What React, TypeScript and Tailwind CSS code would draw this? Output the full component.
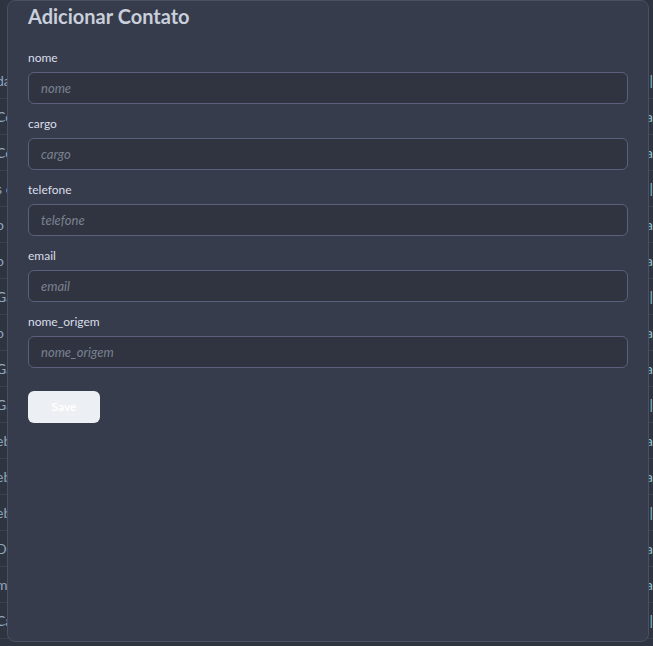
import { useState } from "react";

const FIELDS = ["nome", "cargo", "telefone", "email", "nome_origem"];

const ROWS = [
  "dados", "Contato", "Contato", "s contato", "o Alves", "o Alves", "Gabriel",
  "o Alves", "Gabriel", "Gabriel", "ebert", "ebert", "ebert", "Deise", "mario", "Carlos",
];

export default function App() {
  const [values, setValues] = useState<Record<string, string>>({});

  return (
    <div
      className="relative h-[646px] w-[653px] overflow-hidden bg-[#2e3440]"
      style={{ fontFamily: 'Lato, "Noto Sans", sans-serif' }}
    >
      {/* table behind the modal */}
      <div className="flex flex-col pt-[63px]">
        {ROWS.map((row, i) => (
          <div
            key={i}
            className="flex h-9 items-center justify-between border-b border-[#3b4252] text-sm text-[#8fa6bd]"
          >
            <span className="-ml-1">{row}</span>
            <span className="text-[#88c0d0]">{i % 3 === 0 ? "|" : "a"}</span>
          </div>
        ))}
      </div>

      <div className="absolute top-0 left-[7px] flex h-[642px] w-[642px] flex-col rounded-lg border border-[#4a5063] bg-[#373c4c] px-[20px]">
        <h2 className="mt-[2px] text-[20px] leading-[26px] font-bold text-[#c9cfdb]">
          Adicionar Contato
        </h2>

        <form
          className="mt-[21px] flex flex-col"
          onSubmit={(e) => e.preventDefault()}
        >
          {FIELDS.map((field) => (
            <label key={field} className="mb-[2px] flex flex-col">
              <span className="mb-[6px] text-[12px] leading-[16px] text-[#d8dee9]">
                {field}
              </span>
              <input
                name={field}
                value={values[field] ?? ""}
                onChange={(e) => {
                  const v = e.currentTarget.value;
                  setValues((prev) => ({ ...prev, [field]: v }));
                }}
                placeholder={field}
                className="mb-[10px] h-8 w-[600px] rounded-md border border-[#5b607c] bg-[#2f3440] px-3 text-[13px] text-[#d8dee9] placeholder:text-[#7b8190] placeholder:italic focus:outline-none"
              />
            </label>
          ))}

          <button
            type="submit"
            className="mt-[11px] h-8 w-[72px] rounded-md bg-[#eceff4] text-[12px] font-bold text-white"
          >
            Save
          </button>
        </form>
      </div>
    </div>
  );
}
